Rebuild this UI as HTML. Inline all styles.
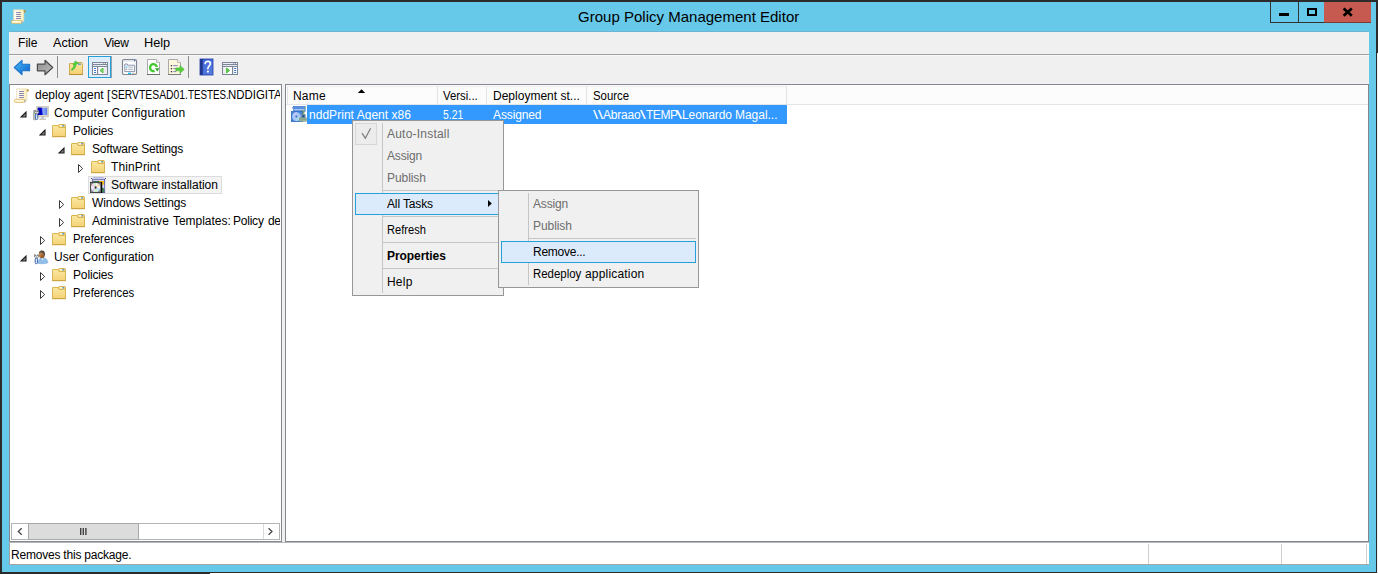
<!DOCTYPE html>
<html lang="en">
<head>
<meta charset="utf-8">
<title>Group Policy Management Editor</title>
<style>
html,body{margin:0;padding:0;}
body{width:1378px;height:574px;overflow:hidden;background:#fff;position:relative;font-family:"Liberation Sans",sans-serif;font-size:12px;color:#000;}
div,span,svg{position:absolute;box-sizing:border-box;}
.t{white-space:nowrap;line-height:16px;height:16px;}
#frame{left:0;top:0;width:1377px;height:573px;background:#2b2b2b;}
#blue{left:2px;top:2px;width:1374px;height:570px;background:#67c9e9;}
#client{left:9px;top:32px;width:1360px;height:533px;background:#f0f0f0;}
.pane{background:#fff;border:1px solid #828790;}
#tree{left:9px;top:84px;width:273px;height:458px;}
#treein{left:0;top:0;width:270px;height:456px;overflow:hidden;}
#list{left:285px;top:84px;width:1084px;height:458px;}
.ic{width:16px;height:16px;}
.menu{background:#f0f0f0;border:1px solid #979797;}
.gut{width:1px;background:#c5c5c5;}
.sep{height:1px;background:#c5c5c5;}
.hot{background:#dcebfc;border:1px solid #26a0da;}
.hd{width:1px;top:86px;height:18px;background:#e5e5e5;}
</style>
</head>
<body>
<div id="frame"></div>
<div style="left:0;top:573px;width:210px;height:1px;background:#2b2b2b"></div>
<div style="left:1377px;top:0;width:1px;height:53px;background:#2b2b2b"></div>
<div style="left:1377px;top:53px;width:1px;height:521px;background:#e6f2f2"></div>
<div id="blue"></div>

<!-- title bar -->
<svg class="ic" style="left:11px;top:9px" viewBox="0 0 16 16"><use href="#i-scroll"/></svg>
<div style="left:1270px;top:2px;width:28px;height:21px;border-left:1px solid #333;border-bottom:1px solid #333;"></div>
<div style="left:1298px;top:2px;width:26px;height:21px;border-left:1px solid #333;border-bottom:1px solid #333;"></div>
<div style="left:1324px;top:2px;width:47px;height:21px;background:#c75a50;border-bottom:1px solid #7a3a35;"></div>
<div style="left:1279px;top:13px;width:10px;height:3px;background:#000"></div>
<div style="left:1307px;top:8px;width:10px;height:8px;border:2px solid #000"></div>
<svg style="left:1341px;top:6px;width:14px;height:12px" viewBox="0 0 14 12"><path d="M2.6 2.4 L10.8 9.8 M10.8 2.4 L2.6 9.8" stroke="#000" stroke-width="2.7" fill="none"/></svg>

<div style="left:9px;top:31px;width:1360px;height:1px;background:#6bb4d4"></div>
<div id="client"></div>
<!-- menubar / toolbar lines -->
<div style="left:9px;top:54px;width:1360px;height:1px;background:#a0a0a0"></div>
<div style="left:9px;top:55px;width:1360px;height:1px;background:#f9f9f9"></div>

<!-- toolbar -->
<svg style="left:9px;top:56px;width:240px;height:28px" viewBox="9 56 240 28">
<defs>
<linearGradient id="gb" x1="0" y1="0" x2="1" y2="1"><stop offset="0" stop-color="#4cc0ff"/><stop offset="1" stop-color="#0a5cc4"/></linearGradient>
<linearGradient id="gg" x1="0" y1="0" x2="1" y2="1"><stop offset="0" stop-color="#8c8c8c"/><stop offset="1" stop-color="#c0c0c0"/></linearGradient>
<linearGradient id="gf" x1="0" y1="0" x2="0" y2="1"><stop offset="0" stop-color="#fbe7a0"/><stop offset="1" stop-color="#f3cf72"/></linearGradient>
<linearGradient id="gh" x1="0" y1="0" x2="1" y2="1"><stop offset="0" stop-color="#3a62d8"/><stop offset="1" stop-color="#5a80e0"/></linearGradient>
</defs>
<!-- back -->
<path d="M14.3 67.5 L22 60.3 L22 64.2 L29.6 64.2 L29.6 70.8 L22 70.8 L22 74.7 Z" fill="url(#gb)" stroke="#1b74cc" stroke-width="1.1" stroke-linejoin="round"/>
<!-- forward -->
<path d="M52.7 67.5 L45 60.3 L45 64.2 L37.4 64.2 L37.4 70.8 L45 70.8 L45 74.7 Z" fill="url(#gg)" stroke="#4a4a4a" stroke-width="1.2" stroke-linejoin="round"/>
<rect x="57" y="56" width="1" height="22" fill="#8d8d8d"/>
<!-- up folder -->
<path d="M69.5 63.5 H76 L77 62.5 H82 L82.5 63.5 V74.5 H69.5 Z" fill="url(#gf)" stroke="#d2ac4c" stroke-width="1"/>
<rect x="69" y="74" width="14" height="1" fill="#b88f2e"/>
<rect x="78" y="63.5" width="3" height="1.3" fill="#4a90e0"/>
<path d="M71.2 69.5 C72.7 68.4 74 66.6 74.2 64.8 L72.9 65.1 L75.3 60.9 L78.5 63.3 L76.3 63.9 C76.1 66.6 74.4 69.2 71.9 70.4 Z" fill="#4fd645" stroke="#2eab2a" stroke-width="0.5"/>
<!-- show/hide tree (checked) -->
<rect x="88.5" y="56.5" width="22" height="21" fill="#deedfb" stroke="#26a0da" stroke-width="1"/>
<rect x="111" y="56" width="1" height="22" fill="#9aa3ad"/>
<g>
<rect x="92" y="62" width="16" height="13" fill="#7d8698"/>
<rect x="93" y="63" width="10.4" height="1" fill="#eef0f5"/><rect x="104.2" y="63" width="1" height="1" fill="#fff"/><rect x="106" y="63" width="1" height="1" fill="#fff"/>
<rect x="93" y="65" width="14" height="1" fill="#e6e9ef"/>
<rect x="93" y="67" width="4" height="7" fill="#fff"/>
<rect x="98.2" y="67" width="8.8" height="7" fill="#fff"/>
<rect x="104" y="67" width="3" height="7" fill="#ececec"/>
<rect x="94" y="68" width="2" height="1" fill="#3a78d0"/><rect x="94" y="70" width="2" height="1" fill="#3a78d0"/><rect x="94" y="72" width="2" height="1" fill="#3a78d0"/>
<path d="M103 68 L103 73 L100 70.5 Z" fill="#8fdc7e" stroke="#3cb52c" stroke-width="0.9" stroke-linejoin="round"/>
</g>
<!-- properties -->
<g>
<rect x="122.5" y="59.5" width="14" height="15" rx="1.6" fill="#fff" stroke="#7f8592" stroke-width="1.2"/>
<rect x="123.5" y="60.4" width="12" height="1" fill="#c8cfdc"/>
<rect x="134" y="60" width="1.2" height="1.2" fill="#4060a0"/>
<path d="M124.8 64 H127.4 V65.2 H134.6 V71.6 H124.8 Z" fill="#f6f8fc" stroke="#8c94aa" stroke-width="1"/>
<rect x="128.2" y="64" width="1.8" height="0.9" fill="#dfe3ec"/><rect x="131.2" y="64" width="1.8" height="0.9" fill="#dfe3ec"/>
<rect x="126" y="66.5" width="1.2" height="1.2" fill="#1fb8f8"/><rect x="128.2" y="66.7" width="4.8" height="0.9" fill="#a8aebc"/>
<rect x="126" y="68.7" width="1.2" height="1.2" fill="#a0a0a0"/><rect x="128.2" y="68.9" width="4.8" height="0.9" fill="#a8aebc"/>
<rect x="128" y="72.7" width="3" height="1.3" fill="#1fb8f8"/><rect x="132" y="72.9" width="2.6" height="1" fill="#b8b8b8"/>
</g>
<!-- refresh -->
<g>
<path d="M147.5 59.5 H156.5 L159.5 62.5 V74.5 H147.5 Z" fill="#fff" stroke="#a9a9a9" stroke-width="1"/>
<path d="M156.5 59.5 V62.5 H159.5" fill="#f2f2f2" stroke="#a9a9a9" stroke-width="0.8"/>
<rect x="147" y="74" width="13" height="1" fill="#6e6e6e"/>
<path d="M156.8 67 A3.4 3.5 0 1 0 154.6 70.9" fill="none" stroke="#44c832" stroke-width="2.3"/>
<path d="M155 68.3 L159.4 68.3 L157.3 71.6 Z" fill="#27a61e"/>
</g>
<!-- export list -->
<g>
<path d="M168.5 59.5 H177.5 L180.5 62.5 V74.5 H168.5 Z" fill="#fdf7de" stroke="#a9a9a9" stroke-width="1"/>
<path d="M177.5 59.5 V62.5 H180.5" fill="#fff" stroke="#a9a9a9" stroke-width="0.8"/>
<rect x="168" y="74" width="13" height="1" fill="#7a7a7a"/>
<rect x="170.8" y="65" width="1.3" height="1.3" fill="#333"/><rect x="173.2" y="65.2" width="4.6" height="0.9" fill="#7a76b0"/>
<rect x="170.8" y="68" width="1.3" height="1.3" fill="#333"/><rect x="173.2" y="68.2" width="3" height="0.9" fill="#7a76b0"/>
<rect x="170.8" y="71" width="1.3" height="1.3" fill="#333"/><rect x="173.2" y="71.2" width="3" height="0.9" fill="#7a76b0"/>
<path d="M175.8 68 H180 V65.6 L184.2 69.4 L180 73.2 V70.8 H175.8 Z" fill="#58cf3c" stroke="#3fb52a" stroke-width="0.6"/>
</g>
<rect x="188" y="56" width="1" height="22" fill="#8d8d8d"/>
<!-- help -->
<g>
<rect x="200" y="59" width="13" height="16" fill="url(#gh)"/>
<rect x="200" y="59" width="2.8" height="16" fill="#22378a"/>
<rect x="200" y="59" width="13" height="16" fill="none" stroke="#1f3aa8" stroke-width="0.8"/>
<path d="M205.2 63.4 C205.2 60.6 210.4 60.6 210.4 63.6 C210.4 65.6 207.9 66 207.9 68.6" fill="none" stroke="#fff" stroke-width="1.7" stroke-linecap="round"/>
<circle cx="207.9" cy="71.6" r="1.1" fill="#fff"/>
</g>
<!-- action pane -->
<g>
<rect x="222" y="62" width="16" height="13" fill="#7d8698"/>
<rect x="223" y="63" width="10.4" height="1" fill="#eef0f5"/><rect x="234.2" y="63" width="1" height="1" fill="#fff"/><rect x="236" y="63" width="1" height="1" fill="#fff"/>
<rect x="223" y="65" width="14" height="1" fill="#e6e9ef"/>
<rect x="223" y="67" width="9" height="7" fill="#fff"/>
<rect x="223" y="67" width="2.6" height="7" fill="#ececec"/>
<rect x="233.2" y="67" width="3.8" height="7" fill="#fff"/>
<rect x="234.2" y="68" width="2" height="1" fill="#3a78d0"/><rect x="234.2" y="70" width="2" height="1" fill="#3a78d0"/><rect x="234.2" y="72" width="2" height="1" fill="#3a78d0"/>
<path d="M226.6 68 L226.6 73 L229.6 70.5 Z" fill="#6fd058" stroke="#3cb52c" stroke-width="0.9" stroke-linejoin="round"/>
</g>
</svg>

<!-- icon defs -->
<svg style="width:0;height:0;left:0;top:0" aria-hidden="true">
<defs>
<linearGradient id="gfo" x1="0" y1="0" x2="0" y2="1"><stop offset="0" stop-color="#fbe8a3"/><stop offset="1" stop-color="#f4d276"/></linearGradient>
<linearGradient id="gsc" x1="0" y1="0" x2="1" y2="0"><stop offset="0" stop-color="#ffffff"/><stop offset="1" stop-color="#fbefb8"/></linearGradient>
<linearGradient id="gmon" x1="0" y1="0" x2="1" y2="0"><stop offset="0" stop-color="#0008c8"/><stop offset="0.35" stop-color="#0a14d8"/><stop offset="0.55" stop-color="#8fa8f8"/><stop offset="1" stop-color="#5a80f0"/></linearGradient>
<linearGradient id="gface" x1="0" y1="0" x2="1" y2="1"><stop offset="0" stop-color="#e0a468"/><stop offset="1" stop-color="#7a3e12"/></linearGradient>
<g id="i-scroll">
<path d="M2.6 0.8 H12.2 L12.8 1.6 V12.6 H2.6 Z" fill="url(#gsc)" stroke="#e8d9b0" stroke-width="0.7"/>
<path d="M12.6 1.2 L14.6 1.6 L14.8 3 L13.2 3.8 Z" fill="#c08a28"/>
<rect x="5.1" y="3" width="4.8" height="1" fill="#8886b0"/>
<rect x="5.1" y="5" width="4.8" height="1" fill="#8886b0"/>
<rect x="5.1" y="7" width="4.8" height="1" fill="#8886b0"/>
<rect x="5.1" y="9" width="4.8" height="1" fill="#8886b0"/>
<rect x="0.4" y="11.4" width="10.6" height="3" rx="1.4" fill="#fdf3c6" stroke="#d9b762" stroke-width="0.8"/>
<rect x="1.4" y="12.2" width="7" height="1" fill="#fffdf2"/>
<path d="M10.2 11.6 L12 12 L11.4 14.4 L10.2 14.4 Z" fill="#b9b6b0"/>
</g>
<g id="i-folder">
<path d="M0.5 2 Q0.5 1.5 1 1.5 H6 L7.2 3.5 H13.5 V12.5 H0.5 Z" fill="url(#gfo)" stroke="#d9b552" stroke-width="1"/>
<path d="M6.3 1.8 L7 0.5 H13 L13.5 1.2 V3.5 H7.4 Z" fill="#f8dc86" stroke="#d9b552" stroke-width="1"/>
<rect x="8" y="1.2" width="2.2" height="1.2" fill="#fff"/><rect x="10.2" y="1.2" width="2" height="1.2" fill="#3a8ee6"/>
<rect x="0" y="12.3" width="14" height="0.9" fill="#c9a240"/>
</g>
<g id="i-wrench">
<path d="M0.6 0.2 L0.2 2.6 L1.6 4 L3.2 4 L4.4 2.6 L4 0.2 L3 1.8 L1.6 1.8 Z" fill="#e8e8e8" stroke="#6a6a6a" stroke-width="0.8"/>
<rect x="1" y="4" width="2.4" height="5.5" rx="1.1" fill="#cfe6f8" stroke="#2f55a4" stroke-width="0.9"/>
</g>
<g id="i-comp">
<rect x="0.2" y="4.4" width="2.6" height="9.4" rx="0.5" fill="#c4c4c4" stroke="#8e8e8e" stroke-width="0.6"/>
<rect x="0.6" y="6.8" width="0.9" height="0.9" fill="#4bd24b"/>
<rect x="3.4" y="0.3" width="12.4" height="10.6" rx="0.8" fill="#dad6c6" stroke="#c2beb0" stroke-width="0.6"/>
<rect x="4.8" y="1.8" width="9.4" height="7.2" fill="url(#gmon)"/>
<path d="M4.8 1.8 H8.4 L9.6 9 H4.8 Z" fill="#0204c4"/>
<rect x="8.6" y="10.9" width="2" height="1.6" fill="#b4b4b0"/>
<rect x="6.2" y="12.4" width="6.8" height="1.4" rx="0.6" fill="#b8b8b4"/>
<g transform="translate(1.4,4)"><use href="#i-wrench"/></g>
</g>
<g id="i-user">
<path d="M5.3 13.4 C5.3 10.2 6.4 7.6 9.4 7.4 C12.6 7.6 14.9 10 14.9 12.7 C13 13.8 8 14 5.3 13.4 Z" fill="#8fbeea" stroke="#7aa6d6" stroke-width="0.5"/>
<path d="M8.6 8.2 L9.4 10.6 L10.4 8.4 Z" fill="#fff"/>
<ellipse cx="8.8" cy="4.4" rx="2.9" ry="3.8" fill="url(#gface)"/>
<path d="M5.9 3.6 C6 0.6 9 -0.2 10.8 1 C12.4 2 12 5.4 11.2 6.8 C11.2 4.4 10.4 2.4 8.4 2.4 C7 2.4 6.2 3 5.9 3.6 Z" fill="#4c4c4c"/>
<g transform="translate(1.2,4.2)"><use href="#i-wrench"/></g>
</g>
<g id="i-swi">
<rect x="3.1" y="0" width="10.7" height="1.7" fill="#b6b6e2"/>
<circle cx="1.6" cy="1.4" r="0.7" fill="#4c4c9c"/><circle cx="15.4" cy="1.4" r="0.7" fill="#4c4c9c"/>
<rect x="2.6" y="2.5" width="12" height="13" fill="#fff" stroke="#5c5ca6" stroke-width="1"/>
<rect x="3" y="2.2" width="11" height="1.2" fill="#8c8cc8"/>
<rect x="3.2" y="4" width="6" height="1.6" fill="#3a7a4c"/>
<rect x="9" y="4" width="5" height="3.8" fill="#fcc012"/>
<rect x="12" y="7.8" width="2.2" height="4.4" fill="#d4d4fa"/>
<path d="M12 10.4 L14.2 11.6 V15.2 H12 Z" fill="#3f8a57"/>
<rect x="0.3" y="5.3" width="11.4" height="10.4" fill="#8a8a8a" stroke="#333" stroke-width="0.9"/>
<rect x="10.8" y="5" width="1.3" height="11" fill="#0a0a0a"/>
<circle cx="5.6" cy="10.5" r="4.5" fill="#fbfbfd"/>
<path d="M5.6 10.5 L1.3 9.2 A4.5 4.5 0 0 1 3.2 6.7 Z" fill="#f6c4e2"/>
<path d="M5.6 10.5 L3.6 6.5 A4.5 4.5 0 0 1 6.2 6.05 Z" fill="#c8f2c4"/>
<path d="M5.6 10.5 L7.4 6.4 A4.5 4.5 0 0 1 9.8 8.9 Z" fill="#fbd6c0"/>
<path d="M5.6 10.5 L10 11.4 A4.5 4.5 0 0 1 8 14.3 Z" fill="#b4dcfa"/>
<path d="M5.6 10.5 L7.2 14.7 A4.5 4.5 0 0 1 4.6 14.9 Z" fill="#bdf2b4"/>
<path d="M5.6 10.5 L3.8 14.6 A4.5 4.5 0 0 1 1.4 12.2 Z" fill="#cfc8f8"/>
<circle cx="5.6" cy="10.5" r="1.5" fill="#bbb"/>
<circle cx="5.6" cy="10.5" r="0.9" fill="#222"/>
</g>
<g id="i-pkg">
<rect x="2.6" y="0.3" width="11.6" height="5" fill="#5a8fe0" stroke="#3a74cc" stroke-width="0.6"/>
<rect x="3.2" y="3.2" width="10.4" height="1" fill="#b8d4f8"/>
<rect x="1.2" y="1.2" width="1.1" height="1.1" fill="#2f6fd0"/><rect x="13.6" y="1.2" width="1.1" height="1.1" fill="#9ad020"/>
<rect x="9.4" y="4.4" width="4" height="4.6" fill="#8aa860"/>
<rect x="0.4" y="5.4" width="11.2" height="10.2" fill="#4a86d8" stroke="#2f6cc4" stroke-width="0.8"/>
<circle cx="5.4" cy="10.6" r="4.3" fill="#a8c8f8"/>
<path d="M5.4 10.6 L2 8 A4.3 4.3 0 0 1 6 6.4 Z" fill="#c0c4f8"/>
<path d="M5.4 10.6 L8.8 13.2 A4.3 4.3 0 0 1 5 14.9 Z" fill="#a4d8e8"/>
<circle cx="5.4" cy="10.6" r="1" fill="#3a6ab8"/>
<rect x="10.6" y="8.6" width="3.6" height="3.4" fill="#5a7aa8" stroke="#7a9a98" stroke-width="0.8"/>
<rect x="11.6" y="9.4" width="1.6" height="1.8" fill="#123a90"/>
<rect x="8.2" y="11.6" width="7.6" height="4" fill="#7a9a88"/>
<rect x="8.6" y="12.6" width="6.8" height="0.7" fill="#a4c0a4"/><rect x="8.6" y="14.2" width="6.8" height="0.7" fill="#a4c0a4"/>
</g>
<polygon id="i-exp" points="6,1.1 6,6 1.1,6" fill="#858585" stroke="#1a1a1a" stroke-width="1.1" stroke-linejoin="miter"/>
<polygon id="i-col" points="0.5,0.5 0.5,8.5 4.7,4.5" fill="#fff" stroke="#3a3a3a" stroke-width="1"/>
</defs>
</svg>

<!-- tree pane -->
<div id="tree" class="pane"><div id="treein">
<div style="left:78px;top:91px;width:134px;height:18px;background:#f4f4f4;border:1px solid #dcdcdc"></div>
<svg class="ic" style="left:4px;top:3px" viewBox="0 0 16 16"><use href="#i-scroll"/></svg>
<svg class="ic" style="left:23px;top:21px" viewBox="0 0 16 16"><use href="#i-comp"/></svg>
<svg style="left:42px;top:39px;width:14px;height:14px" viewBox="0 0 14 14"><use href="#i-folder"/></svg>
<svg style="left:61px;top:57px;width:14px;height:14px" viewBox="0 0 14 14"><use href="#i-folder"/></svg>
<svg style="left:81px;top:75px;width:14px;height:14px" viewBox="0 0 14 14"><use href="#i-folder"/></svg>
<svg class="ic" style="left:80px;top:92px" viewBox="0 0 16 16"><use href="#i-swi"/></svg>
<svg style="left:61px;top:111px;width:14px;height:14px" viewBox="0 0 14 14"><use href="#i-folder"/></svg>
<svg style="left:61px;top:129px;width:14px;height:14px" viewBox="0 0 14 14"><use href="#i-folder"/></svg>
<svg style="left:42px;top:147px;width:14px;height:14px" viewBox="0 0 14 14"><use href="#i-folder"/></svg>
<svg class="ic" style="left:23px;top:165px" viewBox="0 0 16 16"><use href="#i-user"/></svg>
<svg style="left:42px;top:183px;width:14px;height:14px" viewBox="0 0 14 14"><use href="#i-folder"/></svg>
<svg style="left:42px;top:201px;width:14px;height:14px" viewBox="0 0 14 14"><use href="#i-folder"/></svg>
<!-- expanders -->
<svg style="left:10px;top:26px;width:7px;height:7px" viewBox="0 0 7 7"><use href="#i-exp"/></svg>
<svg style="left:29px;top:44px;width:7px;height:7px" viewBox="0 0 7 7"><use href="#i-exp"/></svg>
<svg style="left:48px;top:62px;width:7px;height:7px" viewBox="0 0 7 7"><use href="#i-exp"/></svg>
<svg style="left:10px;top:170px;width:7px;height:7px" viewBox="0 0 7 7"><use href="#i-exp"/></svg>
<svg style="left:68px;top:79px;width:6px;height:9px" viewBox="0 0 6 9"><use href="#i-col"/></svg>
<svg style="left:49px;top:115px;width:6px;height:9px" viewBox="0 0 6 9"><use href="#i-col"/></svg>
<svg style="left:49px;top:133px;width:6px;height:9px" viewBox="0 0 6 9"><use href="#i-col"/></svg>
<svg style="left:30px;top:151px;width:6px;height:9px" viewBox="0 0 6 9"><use href="#i-col"/></svg>
<svg style="left:30px;top:187px;width:6px;height:9px" viewBox="0 0 6 9"><use href="#i-col"/></svg>
<svg style="left:30px;top:205px;width:6px;height:9px" viewBox="0 0 6 9"><use href="#i-col"/></svg>
<span class="t" id="r0a" style="left:25px;top:2px;letter-spacing:-0.004px;">deploy agent [</span>
<span class="t" id="r0b" style="left:101px;top:2px;transform:scaleX(0.8631);transform-origin:0 0;">SERVTESAD01.</span>
<span class="t" id="r0c" style="left:178px;top:2px;transform:scaleX(0.8147);transform-origin:0 0;">TESTES.</span>
<span class="t" id="r0d" style="left:218px;top:2px;transform:scaleX(0.9517);transform-origin:0 0;">NDDIGITA</span>
<span class="t" id="r1" style="left:44px;top:20px;letter-spacing:0.178px;">Computer Configuration</span>
<span class="t" id="r2" style="left:63px;top:38px;letter-spacing:-0.148px;">Policies</span>
<span class="t" id="r3" style="left:82px;top:56px;letter-spacing:-0.173px;">Software Settings</span>
<span class="t" id="r4" style="left:101px;top:74px;letter-spacing:0.120px;">ThinPrint</span>
<span class="t" id="r5" style="left:101px;top:92px;letter-spacing:-0.024px;">Software installation</span>
<span class="t" id="r6" style="left:82px;top:110px;letter-spacing:-0.069px;">Windows Settings</span>
<span class="t" id="r7" style="left:82px;top:128px;letter-spacing:0.119px;">Administrative</span>
<span class="t" id="r7b" style="left:163px;top:128px;letter-spacing:-0.031px;">Templates:</span>
<span class="t" id="r7c" style="left:223px;top:128px;letter-spacing:-0.225px;">Policy</span>
<span class="t" id="r7d" style="left:258px;top:128px;letter-spacing:-0.482px;">de</span>
<span class="t" id="r8" style="left:63px;top:146px;transform:scaleX(0.9454);transform-origin:0 0;">Preferences</span>
<span class="t" id="r9" style="left:44px;top:164px;letter-spacing:-0.010px;">User Configuration</span>
<span class="t" id="r10" style="left:63px;top:182px;letter-spacing:-0.148px;">Policies</span>
<span class="t" id="r11" style="left:63px;top:200px;transform:scaleX(0.9454);transform-origin:0 0;">Preferences</span>
<!-- h scrollbar -->
<div style="left:1px;top:438px;width:269px;height:17px;background:#fff;border:1px solid #b4b4b4"></div>
<div style="left:18px;top:438px;width:111px;height:17px;background:#dcdcdc;border:1px solid #a8a8a8"></div>
<div style="left:253px;top:439px;width:1px;height:15px;background:#d9d9d9"></div>
<svg style="left:1px;top:438px;width:269px;height:17px" viewBox="0 0 269 17">
<path d="M10.7 5.2 L7.3 8.5 L10.7 11.8" fill="none" stroke="#4a4a4a" stroke-width="1.3"/>
<path d="M257.6 5.2 L261 8.5 L257.6 11.8" fill="none" stroke="#4a4a4a" stroke-width="1.3"/>
<rect x="69" y="5" width="1.4" height="7" fill="#404040"/><rect x="71.6" y="5" width="1.4" height="7" fill="#404040"/><rect x="74.2" y="5" width="1.4" height="7" fill="#404040"/>
</svg>
</div></div>

<!-- status bar -->
<div style="left:9px;top:542px;width:1360px;height:23px;background:#fff"></div>
<div style="left:9px;top:542px;width:1360px;height:1px;background:#b4b6ba"></div>
<div style="left:9px;top:564px;width:1360px;height:1px;background:#a8a4a4"></div>
<div style="left:9px;top:543px;width:1px;height:22px;background:#a0a0a0"></div>
<div style="left:1148px;top:544px;width:1px;height:20px;background:#cfcfcf"></div>
<div style="left:1281px;top:544px;width:1px;height:20px;background:#cfcfcf"></div>
<div style="left:1366px;top:544px;width:1px;height:20px;background:#cfcfcf"></div>

<!-- list pane -->
<div id="list" class="pane"></div>
<div style="left:286px;top:85px;width:1082px;height:19px;background:#fcfcfc"></div>
<div style="left:286px;top:104px;width:1082px;height:1px;background:#e5e5e5"></div>
<div style="left:287px;top:86px;width:500px;height:1px;background:#efefef"></div>
<div class="hd" style="left:287px"></div>
<div class="hd" style="left:437px"></div>
<div class="hd" style="left:486px"></div>
<div class="hd" style="left:586px"></div>
<div class="hd" style="left:786px"></div>
<svg style="left:357px;top:88px;width:9px;height:6px" viewBox="0 0 9 6"><path d="M0.8 5 L4.5 1.2 L8.2 5 Z" fill="#000"/></svg>
<div style="left:307px;top:105px;width:480px;height:19px;background:#3399ff"></div>
<svg class="ic" style="left:291px;top:106px" viewBox="0 0 16 16"><use href="#i-pkg"/></svg>
<span class="t" id="ttl" style="left:578px;top:9px;font-size:15px;letter-spacing:0.010px;">Group Policy Management Editor</span>
<span class="t" id="m1" style="left:18px;top:35px;letter-spacing:0.047px;">File</span>
<span class="t" id="m2" style="left:53px;top:35px;transform:scaleX(1.0535);transform-origin:0 0;">Action</span>
<span class="t" id="m3" style="left:104px;top:35px;letter-spacing:-0.310px;">View</span>
<span class="t" id="m4" style="left:144px;top:35px;transform:scaleX(1.0616);transform-origin:0 0;">Help</span>
<span class="t" id="h1" style="left:293px;top:88px;letter-spacing:0.186px;">Name</span>
<span class="t" id="h2" style="left:443px;top:88px;transform:scaleX(0.9479);transform-origin:0 0;">Versi...</span>
<span class="t" id="h3" style="left:493px;top:88px;letter-spacing:0.011px;">Deployment st...</span>
<span class="t" id="h4" style="left:593px;top:88px;transform:scaleX(0.9497);transform-origin:0 0;">Source</span>
<span class="t" id="l1" style="left:309px;top:107px;color:#fff;letter-spacing:0.033px;">nddPrint Agent x86</span>
<span class="t" id="l2" style="left:443px;top:107px;color:#fff;transform:scaleX(0.8625);transform-origin:0 0;">5.21</span>
<span class="t" id="l3" style="left:493px;top:107px;color:#fff;letter-spacing:-0.124px;">Assigned</span>
<span class="t" id="l4a" style="left:593px;top:107px;color:#fff;transform:scaleX(1.5200);transform-origin:0 0;">\\</span>
<span class="t" id="l4b" style="left:603px;top:107px;color:#fff;letter-spacing:-0.191px;">Abraao</span>
<span class="t" id="l4c" style="left:640px;top:107px;color:#fff;transform:scaleX(1.7424);transform-origin:0 0;">\</span>
<span class="t" id="l4d" style="left:646px;top:107px;color:#fff;letter-spacing:-0.459px;">TEMP</span>
<span class="t" id="l4e" style="left:676px;top:107px;color:#fff;transform:scaleX(1.8430);transform-origin:0 0;">\</span>
<span class="t" id="l4f" style="left:682px;top:107px;color:#fff;letter-spacing:-0.108px;">Leonardo</span>
<span class="t" id="l4g" style="left:735px;top:107px;color:#fff;letter-spacing:-0.031px;">Magal...</span>
<span class="t" id="st" style="left:11px;top:547px;letter-spacing:-0.207px;">Removes this package.</span>

<!-- context menu -->
<div class="menu" style="left:352px;top:120px;width:152px;height:176px"></div>
<div class="gut" style="left:382px;top:123px;height:170px"></div>
<div style="left:355px;top:123px;width:22px;height:22px;background:#ececec;border:1px solid #d6d6d6"></div>
<svg style="left:355px;top:123px;width:22px;height:22px" viewBox="355 123 22 22"><path d="M362 133.2 L365.3 138.2 L370.6 128.3" fill="none" stroke="#808080" stroke-width="1.25"/></svg>
<div class="sep" style="left:383px;top:190px;width:120px"></div>
<div class="sep" style="left:383px;top:216px;width:120px"></div>
<div class="sep" style="left:383px;top:242px;width:120px"></div>
<div class="sep" style="left:383px;top:268px;width:120px"></div>
<div class="hot" style="left:355px;top:193px;width:146px;height:22px"></div>
<svg style="left:487px;top:199px;width:6px;height:9px" viewBox="0 0 6 9"><path d="M1 1 L1 8 L4.8 4.5 Z" fill="#000"/></svg>
<span class="t" id="c1" style="left:387px;top:126px;color:#6d6d6d;letter-spacing:0.214px;">Auto-Install</span>
<span class="t" id="c2" style="left:387px;top:148px;color:#6d6d6d;letter-spacing:-0.175px;">Assign</span>
<span class="t" id="c3" style="left:387px;top:170px;color:#6d6d6d;letter-spacing:-0.062px;">Publish</span>
<span class="t" id="c4" style="left:387px;top:196px;letter-spacing:-0.142px;">All Tasks</span>
<span class="t" id="c5" style="left:387px;top:222px;transform:scaleX(0.9259);transform-origin:0 0;">Refresh</span>
<span class="t" id="c6" style="left:387px;top:248px;font-weight:700;letter-spacing:-0.060px;">Properties</span>
<span class="t" id="c7" style="left:387px;top:274px;letter-spacing:0.208px;">Help</span>

<!-- submenu -->
<div class="menu" style="left:498px;top:190px;width:201px;height:98px"></div>
<div class="gut" style="left:528px;top:193px;height:92px"></div>
<div class="sep" style="left:529px;top:238px;width:167px"></div>
<div class="hot" style="left:501px;top:241px;width:195px;height:22px"></div>
<span class="t" id="s1" style="left:533px;top:196px;color:#6d6d6d;letter-spacing:-0.175px;">Assign</span>
<span class="t" id="s2" style="left:533px;top:218px;color:#6d6d6d;letter-spacing:-0.062px;">Publish</span>
<span class="t" id="s3" style="left:533px;top:244px;letter-spacing:-0.254px;">Remove...</span>
<span class="t" id="s4" style="left:533px;top:266px;transform:scaleX(0.9530);transform-origin:0 0;">Redeploy</span>
<span class="t" id="s4b" style="left:585px;top:266px;letter-spacing:0.183px;">application</span>
</body>
</html>
